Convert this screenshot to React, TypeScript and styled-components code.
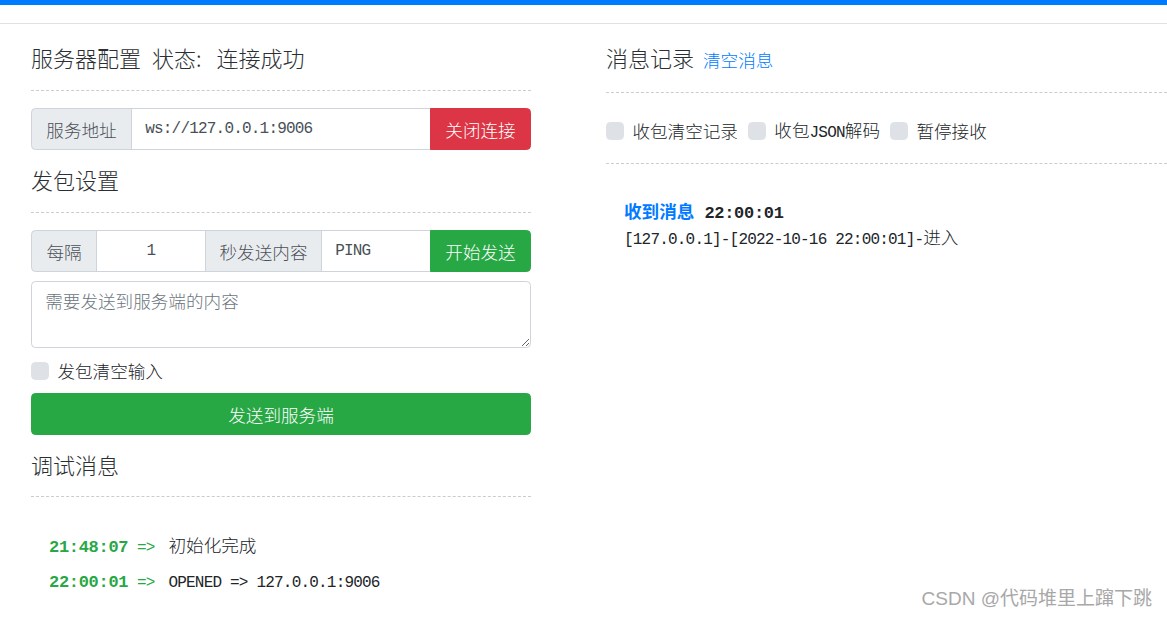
import styled, { createGlobalStyle, css } from "styled-components";

const GlobalStyle = createGlobalStyle`
  html, body {
    margin: 0;
    padding: 0;
    background: #fff;
  }
  body {
    font-family: "Noto Sans CJK SC", "Noto Sans", sans-serif;
    font-size: 17.6px;
    font-weight: 300;
    color: #212529;
    overflow: hidden;
  }
  * {
    box-sizing: border-box;
  }
`;

const monoFont = css`
  font-family: "Liberation Mono", "DejaVu Sans Mono", monospace;
  font-size: 16px;
  letter-spacing: -0.8px;
`;

const Page = styled.div`
  position: relative;
  width: 1167px;
  height: 617px;
  overflow: hidden;
`;

const TopBar = styled.div`
  height: 5px;
  background: #007bff;
`;

const NavStrip = styled.div`
  height: 19px;
  border-bottom: 1px solid #dee2e6;
`;

const Main = styled.div`
  display: flex;
  gap: 75px;
  padding-left: 31px;
`;

const LeftColumn = styled.div`
  width: 500px;
  display: flex;
  flex-direction: column;
`;

const RightColumn = styled.div`
  flex: 1;
  display: flex;
  flex-direction: column;
`;

const SectionHeader = styled.div<{ $top: number; $bottom: number }>`
  display: flex;
  align-items: baseline;
  padding-top: ${({ $top }) => $top}px;
  padding-bottom: ${({ $bottom }) => $bottom}px;
  border-bottom: 1px dashed #ccc;
`;

const Title = styled.h5`
  margin: 0;
  font-size: 22px;
  font-weight: 300;
  line-height: 30px;
  color: #2b2f33;
`;

const Status = styled.span`
  margin-left: 11px;
`;

const StatusValue = styled.span`
  margin-left: 15px;
`;

const LinkText = styled.a`
  margin-left: 9px;
  font-size: 17.6px;
  color: #007bff;
  text-decoration: none;
  cursor: pointer;
`;

const Mono = styled.span<{ $bold?: boolean }>`
  ${monoFont};
  ${({ $bold }) =>
    $bold &&
    css`
      font-size: 17px;
      letter-spacing: -0.3px;
      font-weight: 700;
    `}
`;

const InputGroup = styled.div<{ $mt: number }>`
  display: flex;
  height: 42px;
  margin-top: ${({ $mt }) => $mt}px;

  & > * + * {
    margin-left: -1px;
  }
  & > :first-child {
    border-top-left-radius: 4.4px;
    border-bottom-left-radius: 4.4px;
  }
  & > :last-child {
    border-top-right-radius: 4.4px;
    border-bottom-right-radius: 4.4px;
  }
`;

const Addon = styled.span<{ $w: number }>`
  flex: 0 0 ${({ $w }) => $w}px;
  display: flex;
  align-items: center;
  justify-content: center;
  background: #e9ecef;
  border: 1px solid #ced4da;
  color: #495057;
  font-size: 17.6px;
  white-space: nowrap;
`;

const Field = styled.input<{ $w?: number; $center?: boolean }>`
  ${({ $w }) =>
    $w
      ? css`
          flex: 0 0 ${$w}px;
          width: ${$w}px;
        `
      : css`
          flex: 1;
          min-width: 0;
        `}
  height: 42px;
  padding: 0 13.2px;
  border: 1px solid #ced4da;
  background: #fff;
  color: #495057;
  ${monoFont};
  text-align: ${({ $center }) => ($center ? "center" : "left")};
  outline: none;
`;

const ActionButton = styled.button<{ $variant: "danger" | "success" }>`
  flex: 0 0 101px;
  border: 1px solid ${({ $variant }) => ($variant === "danger" ? "#dc3545" : "#28a745")};
  background: ${({ $variant }) => ($variant === "danger" ? "#dc3545" : "#28a745")};
  color: #fff;
  font-family: inherit;
  font-weight: 300;
  font-size: 17.6px;
  padding: 0;
  position: relative;
  z-index: 1;
  cursor: pointer;
`;

const TextArea = styled.textarea`
  display: block;
  width: 100%;
  height: 67px;
  margin-top: 9px;
  padding: 5.6px 13.2px;
  border: 1px solid #ced4da;
  border-radius: 4.4px;
  font-family: inherit;
  font-weight: 300;
  font-size: 17.6px;
  line-height: 26.4px;
  color: #495057;
  outline: none;

  &::placeholder {
    color: #6c757d;
  }
`;

const CheckRow = styled.div<{ $mt?: number }>`
  display: flex;
  align-items: center;
  height: 26px;
  margin-top: ${({ $mt }) => $mt ?? 0}px;
`;

const CheckLabel = styled.label<{ $mr?: number }>`
  display: inline-flex;
  align-items: center;
  gap: 8.8px;
  margin-right: ${({ $mr }) => $mr ?? 0}px;
  line-height: 26px;
  cursor: pointer;
`;

const CheckBox = styled.input.attrs({ type: "checkbox" })`
  appearance: none;
  margin: 0;
  width: 17.6px;
  height: 17.6px;
  border-radius: 4.4px;
  background: #dee2e6;
  border: 1px solid #dee2e6;
`;

const WideButton = styled.button`
  display: block;
  width: 100%;
  height: 42px;
  margin-top: 9px;
  border: 1px solid #28a745;
  border-radius: 4.4px;
  background: #28a745;
  color: #fff;
  font-family: inherit;
  font-weight: 300;
  font-size: 17.6px;
  cursor: pointer;
`;

const LogList = styled.div`
  padding: 30px 0 0 18px;
`;

const LogLine = styled.div`
  height: 35px;
  line-height: 35px;
  white-space: pre;
`;

const Green = styled.span`
  margin-right: 5px;
  color: #28a745;
`;

const OptionsBar = styled.div`
  padding: 25px 0 19px;
  border-bottom: 1px dashed #ccc;
`;

const MessageList = styled.div`
  padding: 34px 0 0 18px;
`;

const MessageHead = styled.div`
  height: 26px;
  line-height: 26px;
  white-space: pre;
`;

const MessageTag = styled.span`
  margin-right: 10px;
  color: #007bff;
  font-weight: 700;
`;

const MessageBody = styled.div`
  height: 26px;
  line-height: 26px;
  white-space: pre;
`;

const Watermark = styled.div`
  position: absolute;
  right: 15px;
  bottom: 7px;
  font-family: "Liberation Sans", "Noto Sans CJK SC", sans-serif;
  font-size: 19px;
  font-weight: 400;
  line-height: 22px;
  color: #a8a8a8;
  text-shadow: 0 0 1px #fff;
`;

export default function App() {
  return (
    <>
      <GlobalStyle />
      <Page>
        <TopBar />
        <NavStrip />
        <Main>
          <LeftColumn>
            <SectionHeader $top={18} $bottom={18}>
              <Title>
                服务器配置
                <Status>
                  状态:<StatusValue>连接成功</StatusValue>
                </Status>
              </Title>
            </SectionHeader>
            <InputGroup $mt={17}>
              <Addon $w={101}>服务地址</Addon>
              <Field defaultValue="ws://127.0.0.1:9006" />
              <ActionButton $variant="danger">关闭连接</ActionButton>
            </InputGroup>

            <SectionHeader $top={14} $bottom={18}>
              <Title>发包设置</Title>
            </SectionHeader>
            <InputGroup $mt={17}>
              <Addon $w={66}>每隔</Addon>
              <Field $w={110} $center defaultValue="1" />
              <Addon $w={117}>秒发送内容</Addon>
              <Field $w={110} defaultValue="PING" />
              <ActionButton $variant="success">开始发送</ActionButton>
            </InputGroup>
            <TextArea placeholder="需要发送到服务端的内容" />
            <CheckRow $mt={10}>
              <CheckLabel>
                <CheckBox />
                发包清空输入
              </CheckLabel>
            </CheckRow>
            <WideButton>发送到服务端</WideButton>

            <SectionHeader $top={14} $bottom={17}>
              <Title>调试消息</Title>
            </SectionHeader>
            <LogList>
              <LogLine>
                <Green>
                  <Mono $bold>21:48:07</Mono>
                  <Mono> =&gt; </Mono>
                </Green>
                初始化完成
              </LogLine>
              <LogLine>
                <Green>
                  <Mono $bold>22:00:01</Mono>
                  <Mono> =&gt; </Mono>
                </Green>
                <Mono>OPENED =&gt; 127.0.0.1:9006</Mono>
              </LogLine>
            </LogList>
          </LeftColumn>

          <RightColumn>
            <SectionHeader $top={18} $bottom={20}>
              <Title>消息记录</Title>
              <LinkText>清空消息</LinkText>
            </SectionHeader>
            <OptionsBar>
              <CheckRow>
                <CheckLabel $mr={10}>
                  <CheckBox />
                  收包清空记录
                </CheckLabel>
                <CheckLabel $mr={10}>
                  <CheckBox />
                  <span>
                    收包<Mono>JSON</Mono>解码
                  </span>
                </CheckLabel>
                <CheckLabel>
                  <CheckBox />
                  暂停接收
                </CheckLabel>
              </CheckRow>
            </OptionsBar>
            <MessageList>
              <MessageHead>
                <MessageTag>收到消息</MessageTag>
                <Mono $bold>22:00:01</Mono>
              </MessageHead>
              <MessageBody>
                <Mono>[127.0.0.1]-[2022-10-16 22:00:01]-</Mono>进入
              </MessageBody>
            </MessageList>
          </RightColumn>
        </Main>
        <Watermark>CSDN @代码堆里上蹿下跳</Watermark>
      </Page>
    </>
  );
}
